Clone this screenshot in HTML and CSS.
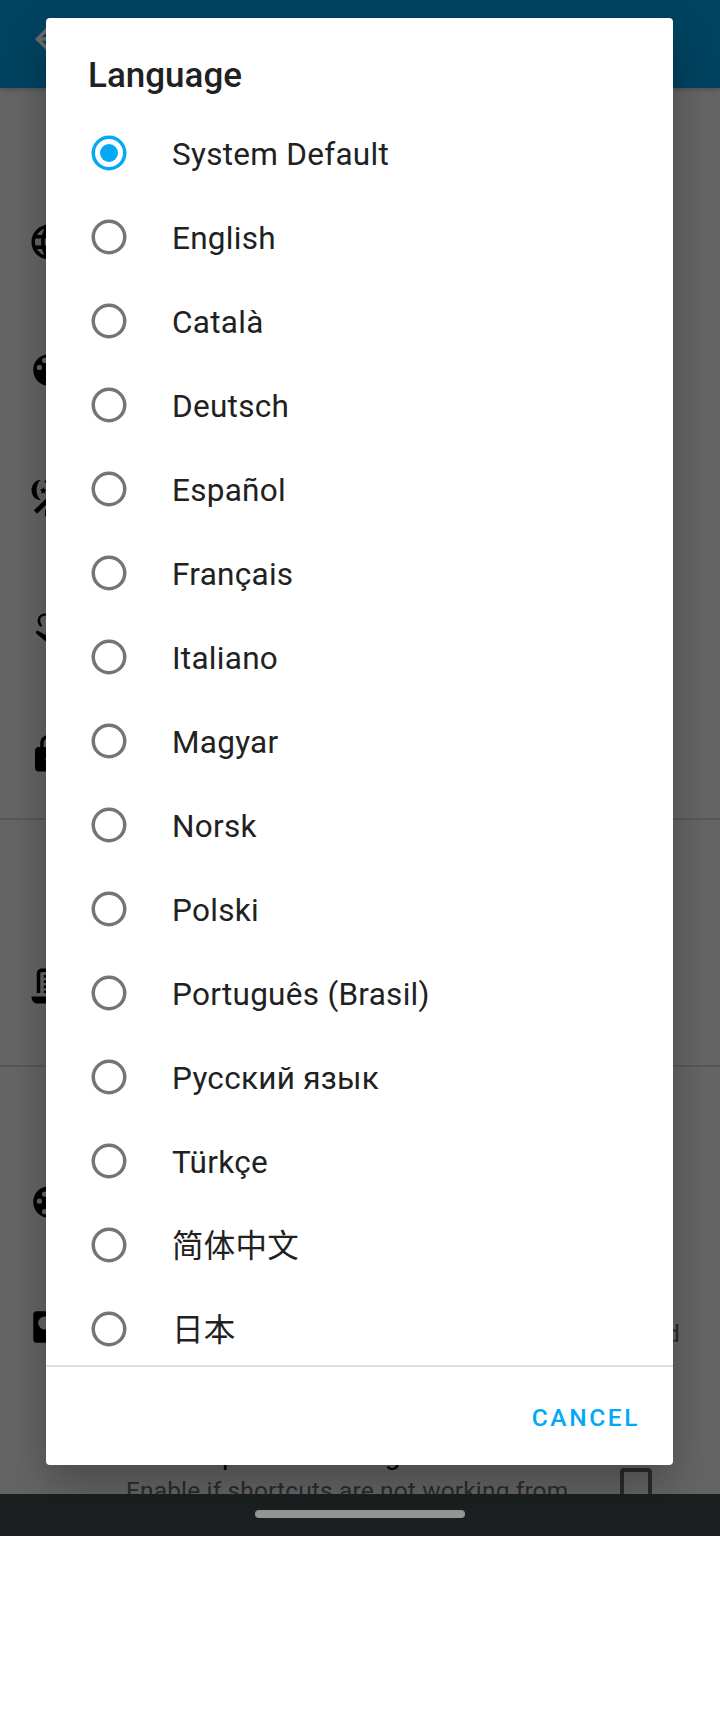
FILE: index.html
```html
<!DOCTYPE html>
<html lang="en">
<head>
<meta charset="utf-8">
<title>Language</title>
<link rel="stylesheet" href="styles.css">
</head>
<body>
<div class="screen">
  <header class="appbar">
    <svg class="icon" viewBox="0 0 24 24"><path d="M20 11H7.83l5.59-5.59L12 4l-8 8 8 8 1.41-1.41L7.83 13H20v-2z"/></svg>
  </header>
  <main class="settings">
    <section class="group group-main">
      <div class="item"><svg class="icon" viewBox="0 0 24 24"><path d="M11.99 2C6.47 2 2 6.48 2 12s4.47 10 9.99 10C17.52 22 22 17.52 22 12S17.52 2 11.99 2zm6.93 6h-2.95c-.32-1.25-.78-2.45-1.38-3.56 1.84.63 3.37 1.91 4.33 3.56zM12 4.04c.83 1.2 1.48 2.53 1.91 3.96h-3.82c.43-1.43 1.08-2.76 1.91-3.96zM4.26 14C4.1 13.36 4 12.69 4 12s.1-1.36.26-2h3.38c-.08.66-.14 1.32-.14 2s.06 1.34.14 2H4.26zm.82 2h2.95c.32 1.25.78 2.45 1.38 3.56-1.84-.63-3.37-1.9-4.33-3.56zm2.95-8H5.08c.96-1.66 2.49-2.93 4.33-3.56C8.81 5.55 8.35 6.75 8.03 8zM12 19.96c-.83-1.2-1.48-2.53-1.91-3.96h3.82c-.43 1.43-1.08 2.76-1.91 3.96zM14.34 14H9.66c-.09-.66-.16-1.32-.16-2s.07-1.35.16-2h4.68c.09.65.16 1.32.16 2s-.07 1.34-.16 2z"/></svg></div>
      <div class="item"><svg class="icon" viewBox="0 0 24 24"><path d="M12 3a9 9 0 0 0 0 18c.83 0 1.5-.67 1.5-1.5 0-.39-.15-.74-.39-1.01-.23-.26-.38-.61-.38-.99 0-.83.67-1.5 1.5-1.5H16c2.76 0 5-2.24 5-5 0-4.42-4.03-8-9-8zm-5.500 9a1.500 1.500 0 1 1 0-3 1.500 1.500 0 0 1 0 3zm3-4a1.500 1.500 0 1 1 0-3 1.500 1.500 0 0 1 0 3z"/></svg></div>
      <div class="item"><svg class="icon" viewBox="0 0 24 24"><path d="M7.300 1.700C4.200 1.600 2 4.500 2 7.500s2.300 5.900 5.400 5.500C5.700 11.800 4.900 9.800 4.900 7.400s.8-4.500 2.400-5.700z"/><path d="M8.800 5.700l.5 1.300 1.400.2-1.100.9.300 1.400-1.100-.7-1.300.7.300-1.400-1.100-.9 1.500-.2z"/><path d="M3.400 19L19.300 3.700l1.700 1.700L5.200 21zM9.300 2.500l1-.8v1.800zM9.700 18.500h2v4h-2z"/></svg></div>
      <div class="item"><svg class="icon" viewBox="0 0 24 24"><path d="M7.300 12.600C4.100 10.200 5.400 5.400 9 4.900h3v1.200H9.500C6.900 6.100 6.200 9.200 8.100 11.600z"/><path d="M11 8v9.500l-5.200-2.700c-1-.2-1.700.7-1.100 1.500L11 21.500h5V8z"/><path class="gap" d="M10.200 8h.8v8h-.8z"/></svg></div>
      <div class="item"><svg class="icon" viewBox="0 0 24 24"><path d="M18 8h-1V6c0-2.760-2.240-5-5-5S7 3.240 7 6v2H6c-1.100 0-2 .9-2 2v10c0 1.100.9 2 2 2h12c1.100 0 2-.9 2-2V10c0-1.100-.9-2-2-2zm-6 9c-1.100 0-2-.9-2-2s.9-2 2-2 2 .9 2 2-.9 2-2 2zm3.100-9H8.900V6c0-1.710 1.390-3.100 3.100-3.100s3.100 1.390 3.100 3.100v2z"/></svg></div>
    </section>
    <section class="group group-log">
      <div class="item"><svg class="icon" viewBox="0 0 24 24"><path d="M5 16V5c0-1.700 1-3 3-3h12v14h-2V4H8c-.7 0-1 .4-1 1v11zM9 5.700h6v1.600H9zM9 8.700h6v1.600H9zM9 11.700h6v1.600H9zM9 14.700h6V16H9zM2 18h20c0 2.500-1.500 4-3.500 4h-13C3.500 22 2 20.500 2 18z"/></svg></div>
    </section>
    <section class="group group-icons">
      <div class="item"><svg class="icon" viewBox="0 0 24 24"><path d="M12 3a9 9 0 1 0 0 18 9 9 0 0 0 0-18zM6.500 13a1.500 1.500 0 1 1 0-3 1.500 1.500 0 0 1 0 3zm3-4a1.500 1.500 0 1 1 0-3 1.500 1.500 0 0 1 0 3zm0 10a1.500 1.500 0 1 1 0-3 1.500 1.500 0 0 1 0 3zm1.500-5.500a.8 1 0 1 1 0-2 .8 1 0 0 1 0 2z"/></svg></div>
      <div class="item item-end"><svg class="icon" viewBox="0 0 24 24"><path d="M5 3h14a2 2 0 0 1 2 2v14a2 2 0 0 1-2 2H5a2 2 0 0 1-2-2V5a2 2 0 0 1 2-2zm4.500 3a3.700 3.700 0 1 0 0 7.400h5V6z"/></svg><span class="summary">d</span></div>
      <div class="item item-check">
        <div class="copy">
          <div class="title"><span>p</span><span>g</span></div>
          <div class="summary">Enable if shortcuts are not working from</div>
        </div>
        <span class="checkbox"></span>
      </div>
    </section>
  </main>
  <div class="navbar"><span class="handle"></span></div>

  <div class="dialog" role="dialog">
    <h1 class="dialog-title">Language</h1>
    <ul class="options">
      <li class="option"><svg class="radio checked" viewBox="0 0 36 36"><circle class="ring" cx="18" cy="18" r="15.75"/><circle class="dot" cx="18" cy="18" r="9"/></svg><span>System Default</span></li>
      <li class="option"><svg class="radio" viewBox="0 0 36 36"><circle class="ring" cx="18" cy="18" r="15.75"/></svg><span>English</span></li>
      <li class="option"><svg class="radio" viewBox="0 0 36 36"><circle class="ring" cx="18" cy="18" r="15.75"/></svg><span>Català</span></li>
      <li class="option"><svg class="radio" viewBox="0 0 36 36"><circle class="ring" cx="18" cy="18" r="15.75"/></svg><span>Deutsch</span></li>
      <li class="option"><svg class="radio" viewBox="0 0 36 36"><circle class="ring" cx="18" cy="18" r="15.75"/></svg><span>Español</span></li>
      <li class="option"><svg class="radio" viewBox="0 0 36 36"><circle class="ring" cx="18" cy="18" r="15.75"/></svg><span>Français</span></li>
      <li class="option"><svg class="radio" viewBox="0 0 36 36"><circle class="ring" cx="18" cy="18" r="15.75"/></svg><span>Italiano</span></li>
      <li class="option"><svg class="radio" viewBox="0 0 36 36"><circle class="ring" cx="18" cy="18" r="15.75"/></svg><span>Magyar</span></li>
      <li class="option"><svg class="radio" viewBox="0 0 36 36"><circle class="ring" cx="18" cy="18" r="15.75"/></svg><span>Norsk</span></li>
      <li class="option"><svg class="radio" viewBox="0 0 36 36"><circle class="ring" cx="18" cy="18" r="15.75"/></svg><span>Polski</span></li>
      <li class="option"><svg class="radio" viewBox="0 0 36 36"><circle class="ring" cx="18" cy="18" r="15.75"/></svg><span>Português (Brasil)</span></li>
      <li class="option"><svg class="radio" viewBox="0 0 36 36"><circle class="ring" cx="18" cy="18" r="15.75"/></svg><span>Русский язык</span></li>
      <li class="option"><svg class="radio" viewBox="0 0 36 36"><circle class="ring" cx="18" cy="18" r="15.75"/></svg><span>Türkçe</span></li>
      <li class="option cjk" lang="zh-CN"><svg class="radio" viewBox="0 0 36 36"><circle class="ring" cx="18" cy="18" r="15.75"/></svg><span>简体中文</span></li>
      <li class="option cjk" lang="ja"><svg class="radio" viewBox="0 0 36 36"><circle class="ring" cx="18" cy="18" r="15.75"/></svg><span>日本</span></li>
    </ul>
    <div class="actions"><button class="cancel">CANCEL</button></div>
  </div>
</div>
</body>
</html>
```
FILE: styles.css
```css
* { box-sizing: border-box; }
body {
  margin: 0;
  background: #fff;
  font-family: Roboto, "Noto Sans CJK SC", sans-serif;
}
.screen {
  position: relative;
  display: flex;
  flex-direction: column;
  width: 720px;
  height: 1536px;
  overflow: hidden;
}

/* Dimmed settings page */
.appbar {
  flex: none;
  height: 88px;
  padding: 18px 28px;
  background: #014361;
  box-shadow: 0 1px 5px rgba(0, 0, 0, .25);
  z-index: 1;
}
.icon { display: block; flex: none; width: 42px; height: 42px; fill: #000; }
.appbar .icon { fill: #6b6b6b; }
.gap { fill: #595959; }
.settings { flex: 1; min-height: 0; overflow: hidden; background: #656565; }
.group + .group { border-top: 2px solid #575757; }
.group-main { height: 730px; padding-top: 90px; }
.group-log { height: 247px; padding-top: 102px; }
.group-icons { padding-top: 71px; }
.item { display: flex; align-items: center; height: 128px; padding: 0 28px; }
.item-end { justify-content: space-between; padding-right: 40px; height: 122px; }
.item-end .summary { padding-top: 13px; }
.item-check { align-items: flex-start; justify-content: space-between; padding: 50px 68px 0 126px; }
.title { display: flex; gap: 147px; padding-left: 96px; font-size: 28px; line-height: 33px; }
.summary {
  font-size: 24.5px;
  line-height: 34px;
  letter-spacing: .14px;
  color: #2b2b2b;
  white-space: nowrap;
}
.copy .summary { padding-top: 3px; }
.checkbox { width: 32px; height: 32px; margin-top: 30px; border: 4px solid #2b2b2b; border-radius: 4px; }
.navbar {
  display: flex;
  flex: none;
  align-items: center;
  justify-content: center;
  height: 42px;
  padding-bottom: 2px;
  background: #1c2021;
}
.handle { width: 210px; height: 8px; border-radius: 4px; background: #979999; }

/* Language picker */
.dialog {
  position: absolute;
  z-index: 2;
  top: 18px;
  left: 46px;
  display: flex;
  flex-direction: column;
  width: 627px;
  height: 1447px;
  border-radius: 4px;
  background: #fff;
  box-shadow: 0 20px 44px rgba(0, 0, 0, .27);
  color: #212121;
}
.dialog-title {
  flex: none;
  height: 93px;
  margin: 0;
  padding: 37px 42px 0;
  font-size: 35px;
  font-weight: 500;
  line-height: 42px;
}
.options {
  height: 1256px;
  margin: 0;
  padding: 0;
  overflow: hidden;
  border-bottom: 2px solid #e0e0e0;
  list-style: none;
}
.option {
  display: flex;
  align-items: center;
  gap: 45px;
  height: 84px;
  padding-left: 45px;
  font-size: 31.5px;
  letter-spacing: .28px;
}
.option span { padding-top: 2px; }
.cjk { font-family: "Noto Sans CJK SC", sans-serif; }
.cjk span { padding: 0 0 4px; }
.radio { flex: none; width: 36px; height: 36px; }
.ring { fill: none; stroke: #757575; stroke-width: 3.5; }
.checked .ring { stroke: #03a9f4; }
.dot { fill: #03a9f4; }
.actions { display: flex; flex: 1; align-items: center; justify-content: flex-end; padding-right: 33px; }
.cancel {
  padding: 3px 0 0;
  border: 0;
  background: none;
  color: #03a9f4;
  font: 500 24.5px/30px Roboto, sans-serif;
  letter-spacing: 2.6px;
}
```
